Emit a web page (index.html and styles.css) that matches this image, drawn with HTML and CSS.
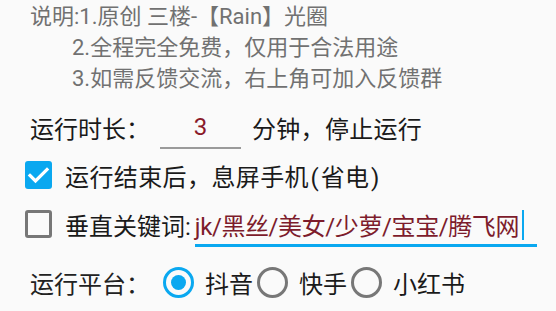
FILE: index.html
```html
<!DOCTYPE html>
<html lang="zh-CN">
<head>
<meta charset="utf-8">
<title>设置</title>
<link rel="stylesheet" href="styles.css">
</head>
<body>
<div class="page">
  <div class="desc">
    <div class="desc-line">说明:1.原创 三楼-【Rain】光圈</div>
    <div class="desc-line indent">2.全程完全免费，仅用于合法用途</div>
    <div class="desc-line indent">3.如需反馈交流，右上角可加入反馈群</div>
  </div>

  <div class="row row-time">
    <span class="label">运行时长：</span>
    <span class="field field-time">3</span>
    <span class="after">分钟，停止运行</span>
  </div>

  <div class="row row-check">
    <span class="checkbox checked">
      <svg viewBox="0 0 27 28" width="27" height="28"><path d="M5 14.5 L10.5 20 L22 8.5" fill="none" stroke="#fff" stroke-width="3.2" stroke-linecap="square"/></svg>
    </span>
    <span class="check-text wide">运行结束后，息屏手机<span class="paren">(</span>省电<span class="paren">)</span></span>
  </div>

  <div class="row row-keyword">
    <span class="checkbox"></span>
    <span class="check-text">垂直关键词:</span>
    <span class="field field-keyword"><span class="kw">jk/黑丝/美女/少萝/宝宝/腾飞网</span><span class="cursor"></span></span>
  </div>

  <div class="row row-platform">
    <span class="label">运行平台：</span>
    <span class="radio on"></span><span class="radio-text">抖音</span>
    <span class="radio"></span><span class="radio-text">快手</span>
    <span class="radio"></span><span class="radio-text">小红书</span>
  </div>
</div>
</body>
</html>
```

FILE: styles.css
```css
html, body {
  margin: 0;
  padding: 0;
  background: #fafafa;
}

body {
  width: 556px;
  height: 311px;
  overflow: hidden;
  font-family: Roboto, "Noto Sans CJK SC", sans-serif;
  color: #1a1a1a;
}

.page {
  padding-top: 1px;
}

.desc {
  padding-left: 30px;
  font-size: 22px;
  line-height: 31px;
  color: #717171;
}

.desc-line {
  white-space: nowrap;
}

.desc-line.indent {
  padding-left: 42px;
}

.row {
  display: flex;
  align-items: center;
  height: 48px;
  font-size: 24px;
  white-space: nowrap;
}

.row-time {
  margin-top: 9px;
  padding-left: 30px;
}

.label {
  display: inline-block;
}

.field-time {
  display: flex;
  align-items: center;
  justify-content: center;
  box-sizing: border-box;
  width: 81px;
  height: 44px;
  margin-left: 10px;
  padding-top: 2px;
  border-bottom: 2px solid #9a9a9a;
  color: #8a1a2a;
}

.after {
  margin-left: 11px;
  letter-spacing: 0.3px;
}

.row-check {
  margin-top: 0;
  padding-left: 25px;
}

.checkbox {
  display: inline-block;
  box-sizing: border-box;
  width: 27px;
  height: 28px;
  border: 3px solid #777;
  border-radius: 3px;
  flex: none;
}

.checkbox.checked {
  border: none;
  background: #0aa8f0;
  border-radius: 3px;
}

.checkbox svg {
  display: block;
}

.check-text {
  margin-left: 13px;
}

.check-text.wide {
  letter-spacing: 0.4px;
}

.paren {
  padding: 0 1.5px;
}

.row-keyword {
  margin-top: 1px;
  padding-left: 25px;
}

.field-keyword {
  display: flex;
  align-items: center;
  box-sizing: border-box;
  width: 342px;
  height: 46px;
  margin-left: 4px;
  align-self: flex-end;
  margin-bottom: 1px;
  padding-top: 4px;
  border-bottom: 3px solid #0aa8f0;
  color: #7d1c2c;
}

.kw {
  letter-spacing: -0.4px;
}

.cursor {
  display: inline-block;
  width: 2px;
  height: 30px;
  margin-left: 3px;
  background: #0aa8f0;
}

.row-platform {
  margin-top: 10px;
  padding-left: 30px;
  color: #222;
}

.radio {
  display: inline-block;
  box-sizing: border-box;
  width: 31px;
  height: 31px;
  border: 3px solid #777;
  border-radius: 50%;
  margin-left: 4px;
  position: relative;
  flex: none;
}

.row-platform .label + .radio {
  margin-left: 13px;
}

.radio.on {
  border-color: #0aa8f0;
}

.radio.on::after {
  content: "";
  position: absolute;
  left: 5px;
  top: 5px;
  width: 15px;
  height: 15px;
  border-radius: 50%;
  background: #0aa8f0;
}

.radio-text {
  margin-left: 11px;
  color: #1a1a1a;
}
```
